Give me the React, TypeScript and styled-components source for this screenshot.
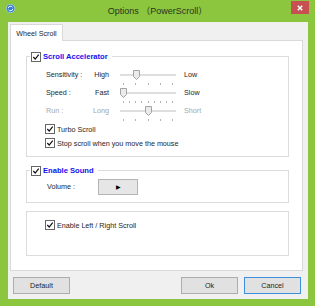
import React from "react";
import styled, { createGlobalStyle } from "styled-components";

const Global = createGlobalStyle`
  html, body { margin: 0; padding: 0; background: #fff; }
  * { box-sizing: border-box; }
`;

const Window = styled.div`
  width: 315px;
  height: 306px;
  background: #8cc63f;
  display: flex;
  flex-direction: column;
  font-family: "Liberation Sans", Arial, sans-serif;
  color: #1e1e1e;
`;

const TitleBar = styled.div`
  height: 22px;
  flex: none;
  display: grid;
  grid-template-columns: 1fr auto 1fr;
  align-items: start;
`;

const AppIcon = styled.svg`
  margin: 4px 0 0 6px;
  display: block;
`;

const Title = styled.div`
  font-size: 9px;
  line-height: 22px;
  color: #2a3322;
  white-space: nowrap;
  font-family: "Liberation Sans", "Noto Sans CJK SC", sans-serif;
`;

const CloseButton = styled.div`
  justify-self: end;
  width: 18px;
  height: 13px;
  margin: 1px 6px 0 0;
  background: #c75050;
  display: flex;
  align-items: center;
  justify-content: center;
`;

const Client = styled.div`
  flex: 1;
  margin: 0 7px 7px 8px;
  background: #f0f0f0;
  display: flex;
  flex-direction: column;
`;

const TabArea = styled.div`
  padding: 2px 5px 0 2px;
  display: flex;
  flex-direction: column;
`;

const TabStrip = styled.div`
  display: flex;
  position: relative;
  z-index: 1;
  margin-bottom: -1px;
`;

const Tab = styled.div`
  height: 17px;
  width: 53px;
  background: #fff;
  border: 1px solid #d9d9d9;
  border-bottom: none;
  font-size: 7.2px;
  display: flex;
  align-items: center;
  justify-content: center;
`;

const Panel = styled.div`
  height: 231px;
  background: #fff;
  border: 1px solid #d9d9d9;
  padding: 10px 13px 0 15px;
  display: flex;
  flex-direction: column;
  gap: 8px;
`;

const Group = styled.fieldset<{ $fixedHeight?: number }>`
  margin: 0;
  padding: 0;
  border: 1px solid #dcdcdc;
  min-width: 0;
  ${(p) => (p.$fixedHeight ? `height: ${p.$fixedHeight}px;` : "")}
`;

const Legend = styled.legend`
  margin-left: 3px;
  padding: 0 4px 0 1px;
  height: 11px;
  display: flex;
  align-items: center;
  gap: 2px;
`;

const LegendText = styled.span`
  font-size: 7.6px;
  font-weight: bold;
  color: #1010f0;
`;

const GroupBody = styled.div<{ $pt: number; $pb: number; $pl: number }>`
  padding: ${(p) => p.$pt}px 0 ${(p) => p.$pb}px ${(p) => p.$pl}px;
  display: flex;
  flex-direction: column;
`;

const SliderRow = styled.div<{ $disabled?: boolean }>`
  height: 18px;
  display: grid;
  grid-template-columns: 40px 23px 57px auto;
  align-items: center;
  font-size: 7.2px;
  color: ${(p) => (p.$disabled ? "#a6a6a6" : "#1e1e1e")};
  padding-left: 1px;
`;

const ValueLabel = styled.span`
  text-align: right;
`;

const SliderCell = styled.div`
  margin-left: 10px;
  width: 57px;
  height: 18px;
  position: relative;
`;

const EndLabel = styled.span`
  margin-left: 18px;
`;

const Track = styled.div`
  position: absolute;
  left: 1px;
  right: 0;
  top: 9px;
  height: 2px;
  background: #dedede;
`;

const Ticks = styled.div`
  position: absolute;
  left: 4px;
  width: 50px;
  top: 18px;
  height: 2px;
  display: flex;
  justify-content: space-between;
`;

const Tick = styled.div`
  width: 1px;
  height: 2px;
  background: #b5b5b5;
`;

const Thumb = styled.svg`
  position: absolute;
  top: 5px;
  margin-left: -3px;
`;

const CheckRow = styled.div`
  height: 14px;
  display: flex;
  align-items: center;
  gap: 2px;
  font-size: 7.2px;
`;

const Box = styled.span`
  width: 10px;
  height: 10px;
  border: 1px solid #666;
  background: #fff;
  display: inline-flex;
  align-items: center;
  justify-content: center;
  flex: none;
`;

const VolumeRow = styled.div`
  height: 17px;
  display: flex;
  align-items: center;
  font-size: 7.2px;
  padding-left: 1px;
`;

const VolumeLabel = styled.span`
  width: 51px;
`;

const PlayButton = styled.div`
  width: 40px;
  height: 16px;
  border: 1px solid #b4b4b4;
  background: #e6e6e6;
  display: flex;
  align-items: center;
  justify-content: center;
  font-size: 6px;
  color: #000;
`;

const Footer = styled.div`
  padding: 6px 7px 5px 5px;
  display: flex;
  gap: 6px;
`;

const Spacer = styled.div`
  flex: 1;
`;

const Button = styled.div<{ $focused?: boolean }>`
  width: 57px;
  height: 17px;
  border: 1px solid ${(p) => (p.$focused ? "#3c8fd9" : "#adadad")};
  background: #e1e1e1;
  display: flex;
  align-items: center;
  justify-content: center;
  font-size: 7.2px;
  color: #1e1e1e;
`;

const Check = ({ on = true }: { on?: boolean }) => (
  <Box>
    {on && (
      <svg width="8" height="8" viewBox="0 0 8 8">
        <path d="M1.3 4 L3.2 6 L6.7 1.6" stroke="#111" strokeWidth="1.2" fill="none" />
      </svg>
    )}
  </Box>
);

type SliderProps = { ticks: number; index: number };
const Slider = ({ ticks, index }: SliderProps) => {
  const pos = 4 + (index / (ticks - 1)) * 50;
  return (
    <SliderCell>
      <Track />
      <Ticks>
        {Array.from({ length: ticks }).map((_, i) => (
          <Tick key={i} />
        ))}
      </Ticks>
      <Thumb width="7" height="10" viewBox="0 0 7 10" style={{ left: pos }}>
        <path d="M0.5 0.5 H6.5 V6.5 L3.5 9.5 L0.5 6.5 Z" fill="#ebebeb" stroke="#a3a3a3" />
      </Thumb>
    </SliderCell>
  );
};

export default function App() {
  return (
    <>
      <Global />
      <Window>
        <TitleBar>
          <AppIcon width="9" height="9" viewBox="0 0 9 9">
            <circle cx="4.5" cy="4.5" r="4.2" fill="#2f7fd6" stroke="#cfe3f7" strokeWidth="0.6" />
            <path d="M2.2 4.2 A2.3 2.3 0 0 1 6.4 3.2" stroke="#fff" strokeWidth="1" fill="none" />
            <path d="M6.8 4.8 A2.3 2.3 0 0 1 2.6 5.8" stroke="#fff" strokeWidth="1" fill="none" />
          </AppIcon>
          <Title>Options （PowerScroll）</Title>
          <CloseButton>
            <svg width="6" height="6" viewBox="0 0 6 6">
              <path d="M0.8 0.8 L5.2 5.2 M5.2 0.8 L0.8 5.2" stroke="#fff" strokeWidth="1.5" />
            </svg>
          </CloseButton>
        </TitleBar>
        <Client>
          <TabArea>
            <TabStrip>
              <Tab>Wheel Scroll</Tab>
            </TabStrip>
            <Panel>
              <Group>
                <Legend>
                  <Check />
                  <LegendText>Scroll Accelerator</LegendText>
                </Legend>
                <GroupBody $pt={3} $pb={6} $pl={18}>
                  <SliderRow>
                    <span>Sensitivity :</span>
                    <ValueLabel>High</ValueLabel>
                    <Slider ticks={5} index={1} />
                    <EndLabel>Low</EndLabel>
                  </SliderRow>
                  <SliderRow>
                    <span>Speed :</span>
                    <ValueLabel>Fast</ValueLabel>
                    <Slider ticks={9} index={0} />
                    <EndLabel>Slow</EndLabel>
                  </SliderRow>
                  <SliderRow $disabled>
                    <span>Run :</span>
                    <ValueLabel>Long</ValueLabel>
                    <Slider ticks={5} index={2} />
                    <EndLabel>Short</EndLabel>
                  </SliderRow>
                  <div style={{ height: 3 }} />
                  <CheckRow>
                    <Check />
                    <span>Turbo Scroll</span>
                  </CheckRow>
                  <CheckRow>
                    <Check />
                    <span>Stop scroll when you move the mouse</span>
                  </CheckRow>
                </GroupBody>
              </Group>
              <Group>
                <Legend>
                  <Check />
                  <LegendText>Enable Sound</LegendText>
                </Legend>
                <GroupBody $pt={2} $pb={7} $pl={19}>
                  <VolumeRow>
                    <VolumeLabel>Volume :</VolumeLabel>
                    <PlayButton>▶</PlayButton>
                  </VolumeRow>
                </GroupBody>
              </Group>
              <Group $fixedHeight={45}>
                <GroupBody $pt={6} $pb={0} $pl={18}>
                  <CheckRow>
                    <Check />
                    <span>Enable Left / Right Scroll</span>
                  </CheckRow>
                </GroupBody>
              </Group>
            </Panel>
          </TabArea>
          <Footer>
            <Button>Default</Button>
            <Spacer />
            <Button>Ok</Button>
            <Button $focused>Cancel</Button>
          </Footer>
        </Client>
      </Window>
    </>
  );
}
